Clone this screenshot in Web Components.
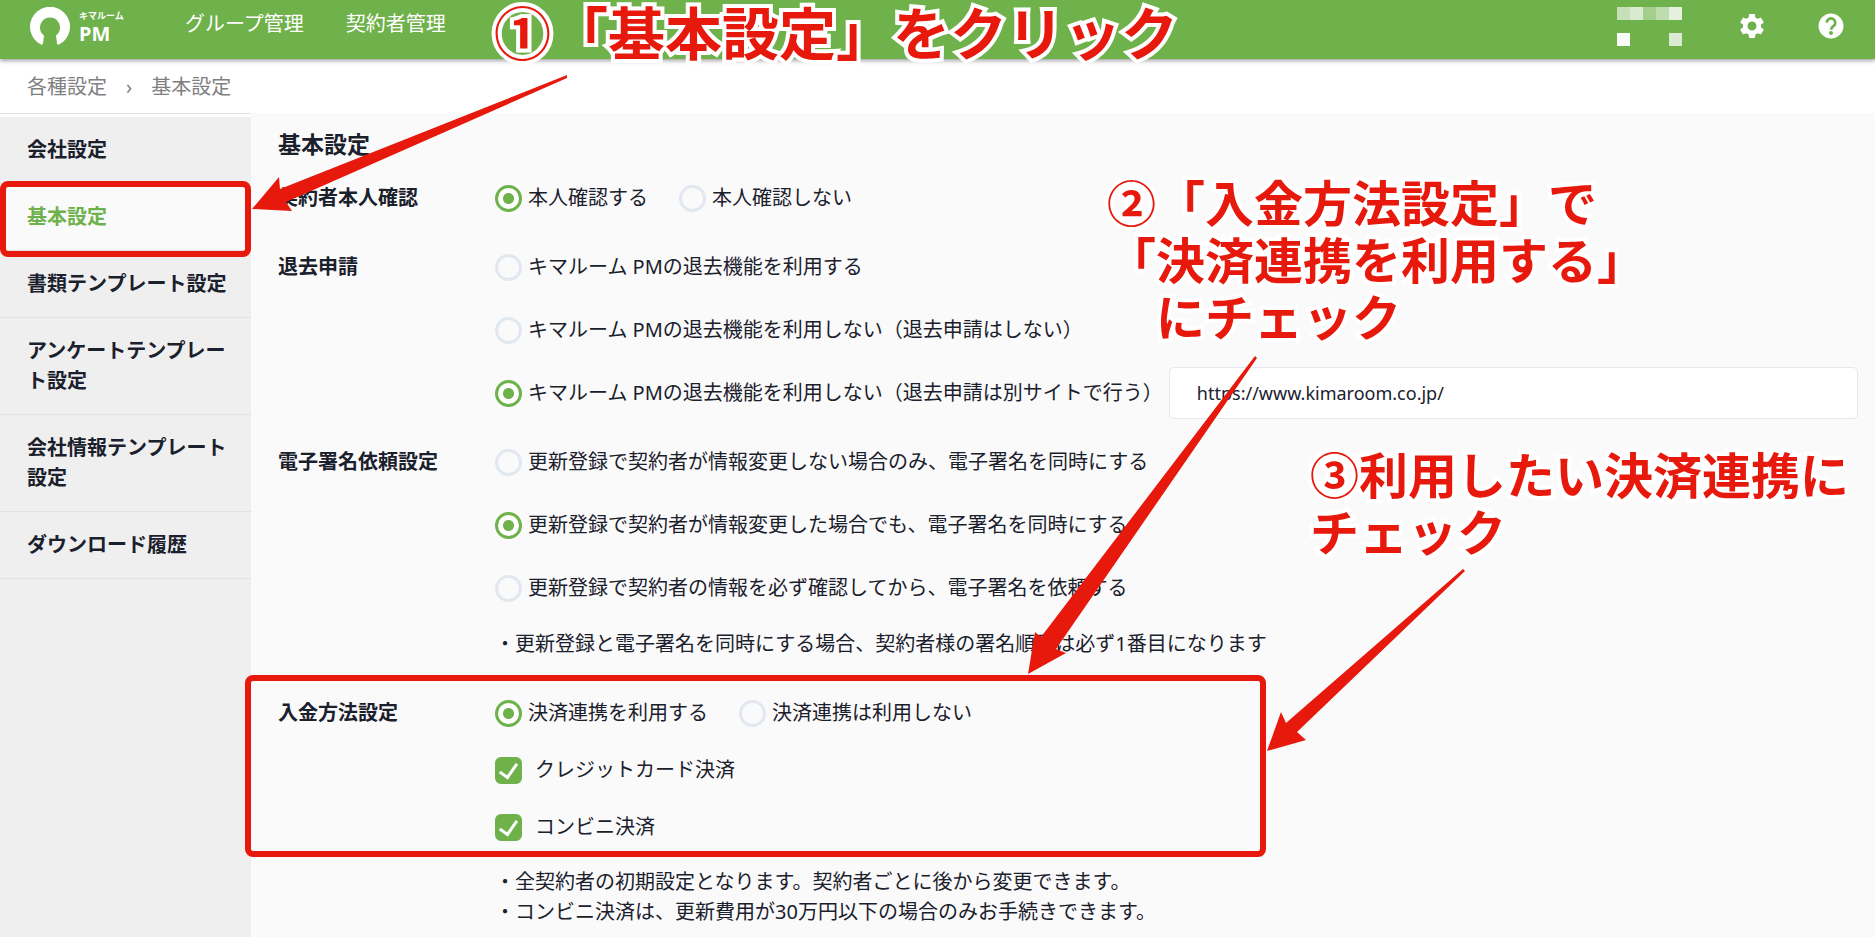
<!DOCTYPE html>
<html lang="ja">
<head>
<meta charset="UTF-8">
<meta name="viewport" content="width=device-width, initial-scale=1">
<title>基本設定 | キマルーム PM</title>
<style>
  :root {
    --green: #6fb14a;
    --red: #e7180c;
    --ink: #1a202c;
    --line: #e2e8f0;
    --surface: #fafafa;
  }
  body {
    margin: 0;
    background: var(--surface);
    color: var(--ink);
    font: 20px/30px "Noto Sans", "Noto Sans CJK JP", sans-serif;
  }
</style>
</head>
<body>
<app-shell>
  <app-header slot="header">
    <a href="#groups">グループ管理</a>
    <a href="#contractors">契約者管理</a>
  </app-header>

  <bread-crumb slot="crumbs">
    <a href="#settings">各種設定</a>
    <a href="#basic">基本設定</a>
  </bread-crumb>

  <side-nav slot="nav">
    <side-item href="#company">会社設定</side-item>
    <side-item href="#basic" current>基本設定</side-item>
    <side-item href="#documents">書類テンプレート設定</side-item>
    <side-item href="#surveys">アンケートテンプレート設定</side-item>
    <side-item href="#company-info">会社情報テンプレート設定</side-item>
    <side-item href="#downloads">ダウンロード履歴</side-item>
  </side-nav>

  <settings-panel heading="基本設定">
    <setting-row label="契約者本人確認">
      <option-line>
        <choice-option checked>本人確認する</choice-option>
        <choice-option>本人確認しない</choice-option>
      </option-line>
    </setting-row>

    <setting-row label="退去申請">
      <option-line><choice-option>キマルーム PMの退去機能を利用する</choice-option></option-line>
      <option-line><choice-option>キマルーム PMの退去機能を利用しない（退去申請はしない）</choice-option></option-line>
      <option-line tight>
        <choice-option checked>キマルーム PMの退去機能を利用しない（退去申請は別サイトで行う）</choice-option>
        <url-field label="退去申請サイトのURL" value="https://www.kimaroom.co.jp/"></url-field>
      </option-line>
    </setting-row>

    <setting-row label="電子署名依頼設定">
      <option-line><choice-option>更新登録で契約者が情報変更しない場合のみ、電子署名を同時にする</choice-option></option-line>
      <option-line><choice-option checked>更新登録で契約者が情報変更した場合でも、電子署名を同時にする</choice-option></option-line>
      <option-line><choice-option>更新登録で契約者の情報を必ず確認してから、電子署名を依頼する</choice-option></option-line>
      <note-text>・更新登録と電子署名を同時にする場合、契約者様の署名順番は必ず1番目になります</note-text>
    </setting-row>

    <setting-row label="入金方法設定" dense>
      <option-line>
        <choice-option checked>決済連携を利用する</choice-option>
        <choice-option>決済連携は利用しない</choice-option>
      </option-line>
      <option-line><choice-option type="checkbox" checked>クレジットカード決済</choice-option></option-line>
      <option-line><choice-option type="checkbox" checked>コンビニ決済</choice-option></option-line>
      <note-text>・全契約者の初期設定となります。契約者ごとに後から変更できます。<br>・コンビニ決済は、更新費用が30万円以下の場合のみお手続きできます。</note-text>
    </setting-row>
  </settings-panel>

  <guide-layer slot="guide">
    <guide-frame style="left: 0; top: 181px; width: 251px; height: 76px"></guide-frame>
    <guide-frame style="left: 245px; top: 675px; width: 1021px; height: 182px"></guide-frame>
    <guide-arrow points="252,209 279,177 280,189 567,75 567,78 286,202 292,211"></guide-arrow>
    <guide-arrow points="1028,674 1035,632 1041,637 1255,356 1257,358 1056,649 1066,653"></guide-arrow>
    <guide-arrow points="1267,751 1281,712 1286,723 1463,569 1465,571 1297,732 1306,740"></guide-arrow>
    <guide-text large style="left: 494px; top: 2px">①「基本設定」をクリック</guide-text>
    <guide-text style="left: 1107px; top: 177px">②「入金方法設定」で<br>「決済連携を利用する」<br>　にチェック</guide-text>
    <guide-text style="left: 1310px; top: 449px">③利用したい決済連携に<br>チェック</guide-text>
  </guide-layer>
</app-shell>

<script>
/**
 * Shared base: attaches the shadow root and renders once on connect.
 */
class KimaElement extends HTMLElement {
  constructor() {
    super();
    this.attachShadow({ mode: 'open' });
  }

  connectedCallback() {
    this.shadowRoot.innerHTML = `<style>:host, * { box-sizing: border-box; }${this.styles()}</style>${this.render()}`;
    this.ready();
  }

  render() { return '<slot></slot>'; }
  styles() { return ''; }
  ready() {}
}

class AppShell extends KimaElement {
  styles() {
    return `
      :host { display: flex; flex-direction: column; min-height: 100vh; position: relative; }
      .body { flex: 1; display: grid; grid-template-columns: 251px minmax(0, 1fr); }
    `;
  }

  render() {
    return `
      <slot name="header"></slot>
      <slot name="crumbs"></slot>
      <div class="body">
        <slot name="nav"></slot>
        <slot></slot>
      </div>
      <slot name="guide"></slot>
    `;
  }
}

class AppHeader extends KimaElement {
  styles() {
    return `
      :host {
        display: flex; align-items: center; height: 59px; padding: 0 29px 7px 30px;
        background: var(--green); color: #fff; position: relative; z-index: 1;
        box-shadow: 0 2px 4px rgba(0, 0, 0, .35);
      }
      .logo { display: flex; align-items: center; gap: 9px; width: 155px; color: inherit; text-decoration: none; font-weight: 700; }
      .logo svg { width: 40px; height: 38px; }
      .logo span { display: block; }
      .kana { font-size: 9px; line-height: 16px; }
      .name { font-size: 20px; line-height: 20px; }
      nav { flex: 1; display: flex; gap: 42px; padding-bottom: 4px; }
      ::slotted(a) { color: #fff; text-decoration: none; }
      .user { display: grid; grid-template-columns: repeat(5, 13px); grid-auto-rows: 13px; margin-right: 55px; }
      .tools { display: flex; gap: 49px; }
      button { border: 0; padding: 0; background: none; color: inherit; width: 30px; height: 30px; }
      button svg { display: block; width: 30px; height: 30px; }
    `;
  }

  render() {
    const tiles = ['#c8e0b9', '#d9ead0', '#a3ce8b', '#bfdcae', '#e5f0df',
      '', '', '', '', '', '#fafcf9', '', '', '', '#dbead2'];
    return `
      <a class="logo" href="#home">
        <svg viewBox="0 0 40 38" aria-hidden="true"><path fill="#fff" d="M11 37.6A20 20 0 1 1 29 37.6Q27.500 38.300 27 36.500L26 28.500A10 10 0 1 0 14 28.500L13 36.500Q12.500 38.300 11 37.600Z"/></svg>
        <span><span class="kana">キマルーム</span><span class="name">PM</span></span>
      </a>
      <nav><slot></slot></nav>
      <div class="user">${tiles.map(c => `<i style="background:${c || 'none'}"></i>`).join('')}</div>
      <div class="tools">
        <button aria-label="設定"><svg viewBox="0 0 24 24" fill="currentColor"><path d="M19.140 12.940c.040-.3.060-.610.060-.940 0-.320-.020-.640-.070-.940l2.030-1.580a.490.490 0 0 0 .120-.610l-1.920-3.320a.488.488 0 0 0-.590-.220l-2.390.960c-.5-.380-1.030-.7-1.620-.940l-.360-2.540a.484.484 0 0 0-.480-.410h-3.840c-.240 0-.430.170-.470.410l-.360 2.540c-.590.240-1.130.570-1.620.940l-2.390-.960c-.220-.080-.470 0-.590.220L2.740 8.870c-.120.210-.080.470.120.610l2.030 1.580c-.050.3-.090.630-.090.940s.020.640.070.940l-2.030 1.580a.490.490 0 0 0-.120.610l1.920 3.320c.120.220.370.290.590.220l2.390-.960c.5.380 1.030.7 1.620.940l.360 2.540c.050.240.240.410.480.410h3.840c.240 0 .440-.170.470-.410l.360-2.540c.590-.240 1.130-.560 1.620-.940l2.390.960c.220.080.470 0 .590-.220l1.920-3.320c.120-.220.070-.470-.120-.610l-2.010-1.580zM12 15.600A3.600 3.600 0 1 1 12 8.400a3.600 3.600 0 0 1 0 7.200z"/></svg></button>
        <button aria-label="ヘルプ"><svg viewBox="0 0 24 24" fill="currentColor"><path d="M12 2C6.480 2 2 6.480 2 12s4.480 10 10 10 10-4.480 10-10S17.520 2 12 2z"/><path d="M8.600 9.300a3.400 3.400 0 1 1 5.700 2.500c-1.300 1.100-2.300 1.500-2.300 3.200" fill="none" stroke="var(--green)" stroke-width="2.200"/><circle cx="12" cy="17.600" r="1.600" fill="var(--green)"/></svg></button>
      </div>
    `;
  }
}

class BreadCrumb extends KimaElement {
  styles() {
    return `
      :host { display: flex; align-items: center; gap: 19px; height: 54px; padding: 2px 0 0 27px; background: #fff; }
      ::slotted(a) { color: #808080; text-decoration: none; }
      .sep { color: #808080; }
    `;
  }

  render() {
    return '<slot name="first"></slot><span class="sep">›</span><slot></slot>';
  }

  // The first crumb goes before the separator
  ready() {
    this.firstElementChild.slot = 'first';
  }
}

class SideNav extends KimaElement {
  styles() {
    return `
      :host { display: block; background: #efefef; border-top: 1px solid #e2e2e2; }
      nav { display: flex; flex-direction: column; border-top: 3px solid #fff; }
    `;
  }

  render() { return '<nav><slot></slot></nav>'; }
}

class SideItem extends KimaElement {
  styles() {
    return `
      :host { display: block; border-bottom: 1px solid #e2e2e2; }
      a { display: block; padding: 18px 22px 18px 27px; color: inherit; font-weight: 700; text-decoration: none; }
      :host([current]) a { background: var(--surface); color: var(--green); }
    `;
  }

  render() { return `<a href="${this.getAttribute('href')}"><slot></slot></a>`; }
}

class SettingsPanel extends KimaElement {
  styles() {
    return `
      :host { display: block; padding: 16px 17px 0 27px; }
      h1 { margin: 0 0 13px; font-size: 23px; line-height: 30px; }
      .rows { display: flex; flex-direction: column; gap: 17px; }
    `;
  }

  render() {
    return `<h1>${this.getAttribute('heading')}</h1><div class="rows"><slot></slot></div>`;
  }
}

class SettingRow extends KimaElement {
  styles() {
    return `
      :host { display: grid; grid-template-columns: 217px minmax(0, 1fr); --option-height: 52px; --note-space: 4px 0 14px; }
      :host([dense]) { --option-height: 46px; --note-space: 6px 0 0; }
      h2 { margin: 0; font-size: 20px; line-height: var(--option-height); }
      .options { display: flex; flex-direction: column; gap: 11px; }
    `;
  }

  render() {
    const label = this.getAttribute('label');
    return `<h2>${label}</h2><div class="options" role="group" aria-label="${label}"><slot></slot></div>`;
  }

  // Radios live in separate shadow roots, so exclusivity is kept here
  ready() {
    this.addEventListener('choice', (e) => {
      this.querySelectorAll('choice-option:not([type="checkbox"])').forEach((el) => {
        if (el !== e.target) el.uncheck();
      });
    });
  }
}

class OptionLine extends KimaElement {
  styles() {
    return `
      :host { display: flex; align-items: center; gap: 31px; min-height: var(--option-height); }
      :host([tight]) { gap: 6px; }
    `;
  }
}

class ChoiceOption extends KimaElement {
  styles() {
    return `
      :host { display: block; flex: none; }
      label { display: flex; align-items: center; gap: 6px; }
      input {
        appearance: none; flex: none; display: grid; place-items: center;
        width: 27px; height: 27px; margin: 0;
        border: 3px solid var(--line); border-radius: 50%;
      }
      input:checked { border-color: var(--green); background: radial-gradient(circle, var(--green) 5px, #fff 6px); }
      :host([type="checkbox"]) label { gap: 13px; }
      input[type="checkbox"] { border-radius: 6px; }
      input[type="checkbox"]:checked { background: var(--green); }
      input[type="checkbox"]:checked::after {
        content: ""; width: 8px; height: 15px; margin-bottom: 5px;
        border: solid #fff; border-width: 0 3px 3px 0; transform: rotate(35deg);
      }
    `;
  }

  render() {
    const type = this.getAttribute('type') || 'radio';
    return `<label><input type="${type}" ${this.hasAttribute('checked') ? 'checked' : ''}><slot></slot></label>`;
  }

  ready() {
    const input = this.shadowRoot.querySelector('input');
    input.addEventListener('change', () => {
      if (input.type === 'radio') this.dispatchEvent(new CustomEvent('choice', { bubbles: true }));
    });
  }

  uncheck() {
    this.shadowRoot.querySelector('input').checked = false;
  }
}

class UrlField extends KimaElement {
  styles() {
    return `
      :host { display: block; flex: 1; min-width: 0; }
      input {
        display: block; width: 100%; height: 52px; padding: 0 27px;
        border: 1px solid var(--line); border-radius: 5px; background: #fff;
        color: inherit; font: inherit; font-size: 18px;
      }
    `;
  }

  render() {
    return `<input type="url" aria-label="${this.getAttribute('label')}" value="${this.getAttribute('value')}">`;
  }
}

class NoteText extends KimaElement {
  styles() {
    return ':host { display: block; padding: var(--note-space); }';
  }
}

/* Walkthrough marks drawn over the page */

class GuideLayer extends KimaElement {
  styles() {
    return ':host { position: absolute; inset: 0; z-index: 2; pointer-events: none; }';
  }
}

class GuideFrame extends KimaElement {
  styles() {
    return ':host { position: absolute; border: 6px solid var(--red); border-radius: 8px; }';
  }
}

class GuideArrow extends KimaElement {
  styles() {
    return `
      :host { position: absolute; inset: 0; }
      svg { display: block; width: 100%; height: 100%; }
      polygon { fill: var(--red); }
    `;
  }

  render() { return `<svg aria-hidden="true"><polygon points="${this.getAttribute('points')}"/></svg>`; }
}

class GuideText extends KimaElement {
  styles() {
    return `
      :host {
        position: absolute; color: var(--red); white-space: nowrap;
        font: 700 49px/57px "Liberation Sans", "Noto Sans CJK JP", sans-serif;
        -webkit-text-stroke: 8px #fff; paint-order: stroke fill;
      }
      :host([large]) { font-size: 57px; line-height: 66px; }
    `;
  }
}

customElements.define('app-shell', AppShell);
customElements.define('app-header', AppHeader);
customElements.define('bread-crumb', BreadCrumb);
customElements.define('side-nav', SideNav);
customElements.define('side-item', SideItem);
customElements.define('settings-panel', SettingsPanel);
customElements.define('setting-row', SettingRow);
customElements.define('option-line', OptionLine);
customElements.define('choice-option', ChoiceOption);
customElements.define('url-field', UrlField);
customElements.define('note-text', NoteText);
customElements.define('guide-layer', GuideLayer);
customElements.define('guide-frame', GuideFrame);
customElements.define('guide-arrow', GuideArrow);
customElements.define('guide-text', GuideText);
</script>
</body>
</html>
